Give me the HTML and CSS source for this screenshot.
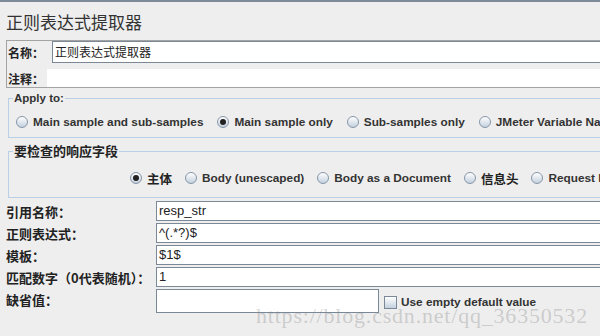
FILE: index.html
```html
<!DOCTYPE html>
<html lang="zh-CN">
<head>
    <meta charset="UTF-8">
    <meta name="viewport" content="width=device-width, initial-scale=1.0">
    <title>正则表达式提取器</title>
    <link rel="stylesheet" href="styles.css">
</head>
<body>
    <div class="top-bar"></div>

    <div class="page">
        <h1 class="title">正则表达式提取器</h1>

        <div class="name-panel">
            <div class="name-row">
                <span class="cn-label name-label">名称：</span>
                <div class="name-field">正则表达式提取器</div>
            </div>
            <div class="name-row comment-row">
                <span class="cn-label comment-label">注释：</span>
                <div class="comment-field"></div>
            </div>
        </div>

        <fieldset class="group apply-group">
            <legend>Apply to:</legend>
            <div class="radio-row">
                <label class="radio-item"><span class="radio"></span>Main sample and sub-samples</label>
                <label class="radio-item"><span class="radio on"></span>Main sample only</label>
                <label class="radio-item"><span class="radio"></span>Sub-samples only</label>
                <label class="radio-item"><span class="radio"></span>JMeter Variable Name to use</label>
            </div>
        </fieldset>

        <fieldset class="group field-group">
            <legend class="cn-legend">要检查的响应字段</legend>
            <div class="radio-row field-row">
                <label class="radio-item"><span class="radio on"></span><span class="cn">主体</span></label>
                <label class="radio-item"><span class="radio"></span>Body (unescaped)</label>
                <label class="radio-item"><span class="radio"></span>Body as a Document</label>
                <label class="radio-item"><span class="radio"></span><span class="cn">信息头</span></label>
                <label class="radio-item"><span class="radio"></span>Request Headers</label>
            </div>
        </fieldset>

        <div class="form-grid">
            <span class="cn-label">引用名称：</span>
            <div class="text-field">resp_str</div>

            <span class="cn-label">正则表达式：</span>
            <div class="text-field">^(.*?)$</div>

            <span class="cn-label">模板：</span>
            <div class="text-field">$1$</div>

            <span class="cn-label">匹配数字（0代表随机）：</span>
            <div class="text-field">1</div>

            <span class="cn-label default-label">缺省值：</span>
            <div class="default-row">
                <div class="text-field default-field"></div>
                <label class="check-item"><span class="checkbox"></span>Use empty default value</label>
            </div>
        </div>
    </div>

    <div class="watermark">https://blog.csdn.net/qq_36350532</div>
</body>
</html>
```

FILE: styles.css
```css
body {
    margin: 0;
    width: 600px;
    height: 336px;
    overflow: hidden;
    position: relative;
    background-color: #eeeeee;
    font-family: "Liberation Sans", Arial, sans-serif;
    color: #333333;
}
.top-bar {
    height: 2px;
    background-color: #7d8a98;
}
.page {
    width: 740px;
    padding-left: 6px;
}
.title {
    margin: 10px 0 8px;
    font: normal 17px/20px "Noto Sans CJK SC", sans-serif;
    color: #333333;
}
.cn-label, .cn {
    font-family: "Noto Sans CJK SC", sans-serif;
    font-weight: bold;
    color: #222222;
}

/* name / comment box */
.name-panel {
    border: 1px solid #a3a3a3;
    border-right: none;
    padding-left: 1px;
}
.name-row {
    display: flex;
    align-items: center;
    height: 22px;
}
.comment-row {
    margin-top: 6px;
    height: 18px;
}
.name-label {
    width: 44px;
    font-size: 12px;
}
.comment-label {
    width: 39px;
    font-size: 12px;
}
.name-field {
    flex: 1;
    height: 22px;
    box-sizing: border-box;
    border: 1px solid #7b8898;
    border-right: none;
    background-color: #ffffff;
    padding-left: 2px;
    font: 12px/20px "Noto Sans CJK SC", sans-serif;
    color: #222222;
}
.comment-field {
    flex: 1;
    height: 18px;
    background-color: #ffffff;
}

/* titled groups */
.group {
    margin: 3px 0 0 2px;
    padding: 0 0 8px 0;
    border: 1px solid #b8cfe5;
    border-right: none;
}
.group legend {
    margin-left: 4px;
    padding: 0 1px;
    font-weight: bold;
    font-size: 11.5px;
    line-height: 14px;
}
.group .cn-legend {
    font-family: "Noto Sans CJK SC", sans-serif;
    font-size: 13px;
    color: #222222;
}
.field-group {
    margin-top: 6px;
    padding-bottom: 12px;
}
.radio-row {
    display: flex;
    align-items: center;
    gap: 14px;
    height: 14px;
    padding: 10px 0 0 7px;
    white-space: nowrap;
}
.field-row {
    gap: 13px;
    padding: 13px 0 0 121px;
}
.radio-item {
    display: flex;
    align-items: center;
    gap: 5px;
    font-size: 11.8px;
    font-weight: bold;
}
.radio-item .cn {
    font-size: 12.5px;
}
.radio {
    position: relative;
    width: 12px;
    height: 12px;
    box-sizing: border-box;
    border-radius: 50%;
    border: 1px solid #8696a8;
    background: linear-gradient(#ffffff, #c3d0de);
}
.radio.on::after {
    content: "";
    position: absolute;
    left: 2px;
    top: 2px;
    width: 6px;
    height: 6px;
    border-radius: 50%;
    background-color: #222222;
}

/* bottom form */
.form-grid {
    display: grid;
    grid-template-columns: 150px 1fr;
    grid-template-rows: 20px 20px 20px 20px 24px;
    row-gap: 2px;
    margin-top: 3px;
    align-items: center;
}
.form-grid .cn-label {
    font-size: 13px;
}
.default-label {
    align-self: start;
    padding-top: 1px;
}
.text-field {
    height: 20px;
    box-sizing: border-box;
    border: 1px solid #7b8898;
    border-right: none;
    background-color: #ffffff;
    padding-left: 2px;
    font-size: 13px;
    line-height: 18px;
    color: #222222;
}
.default-row {
    display: flex;
    align-items: center;
    height: 24px;
}
.default-field {
    width: 223px;
    height: 24px;
    border-right: 1px solid #7b8898;
}
.check-item {
    display: flex;
    align-items: center;
    gap: 4px;
    margin: 2px 0 0 5px;
    font-size: 11.8px;
    font-weight: bold;
}
.checkbox {
    width: 13px;
    height: 13px;
    box-sizing: border-box;
    border: 1px solid #7b8898;
    background: linear-gradient(#ffffff, #c3d0de);
}

.watermark {
    position: absolute;
    left: 256px;
    top: 305px;
    font: 22px/22px "Liberation Serif", serif;
    letter-spacing: 0.8px;
    color: rgba(120, 120, 120, 0.3);
    white-space: nowrap;
}
```
